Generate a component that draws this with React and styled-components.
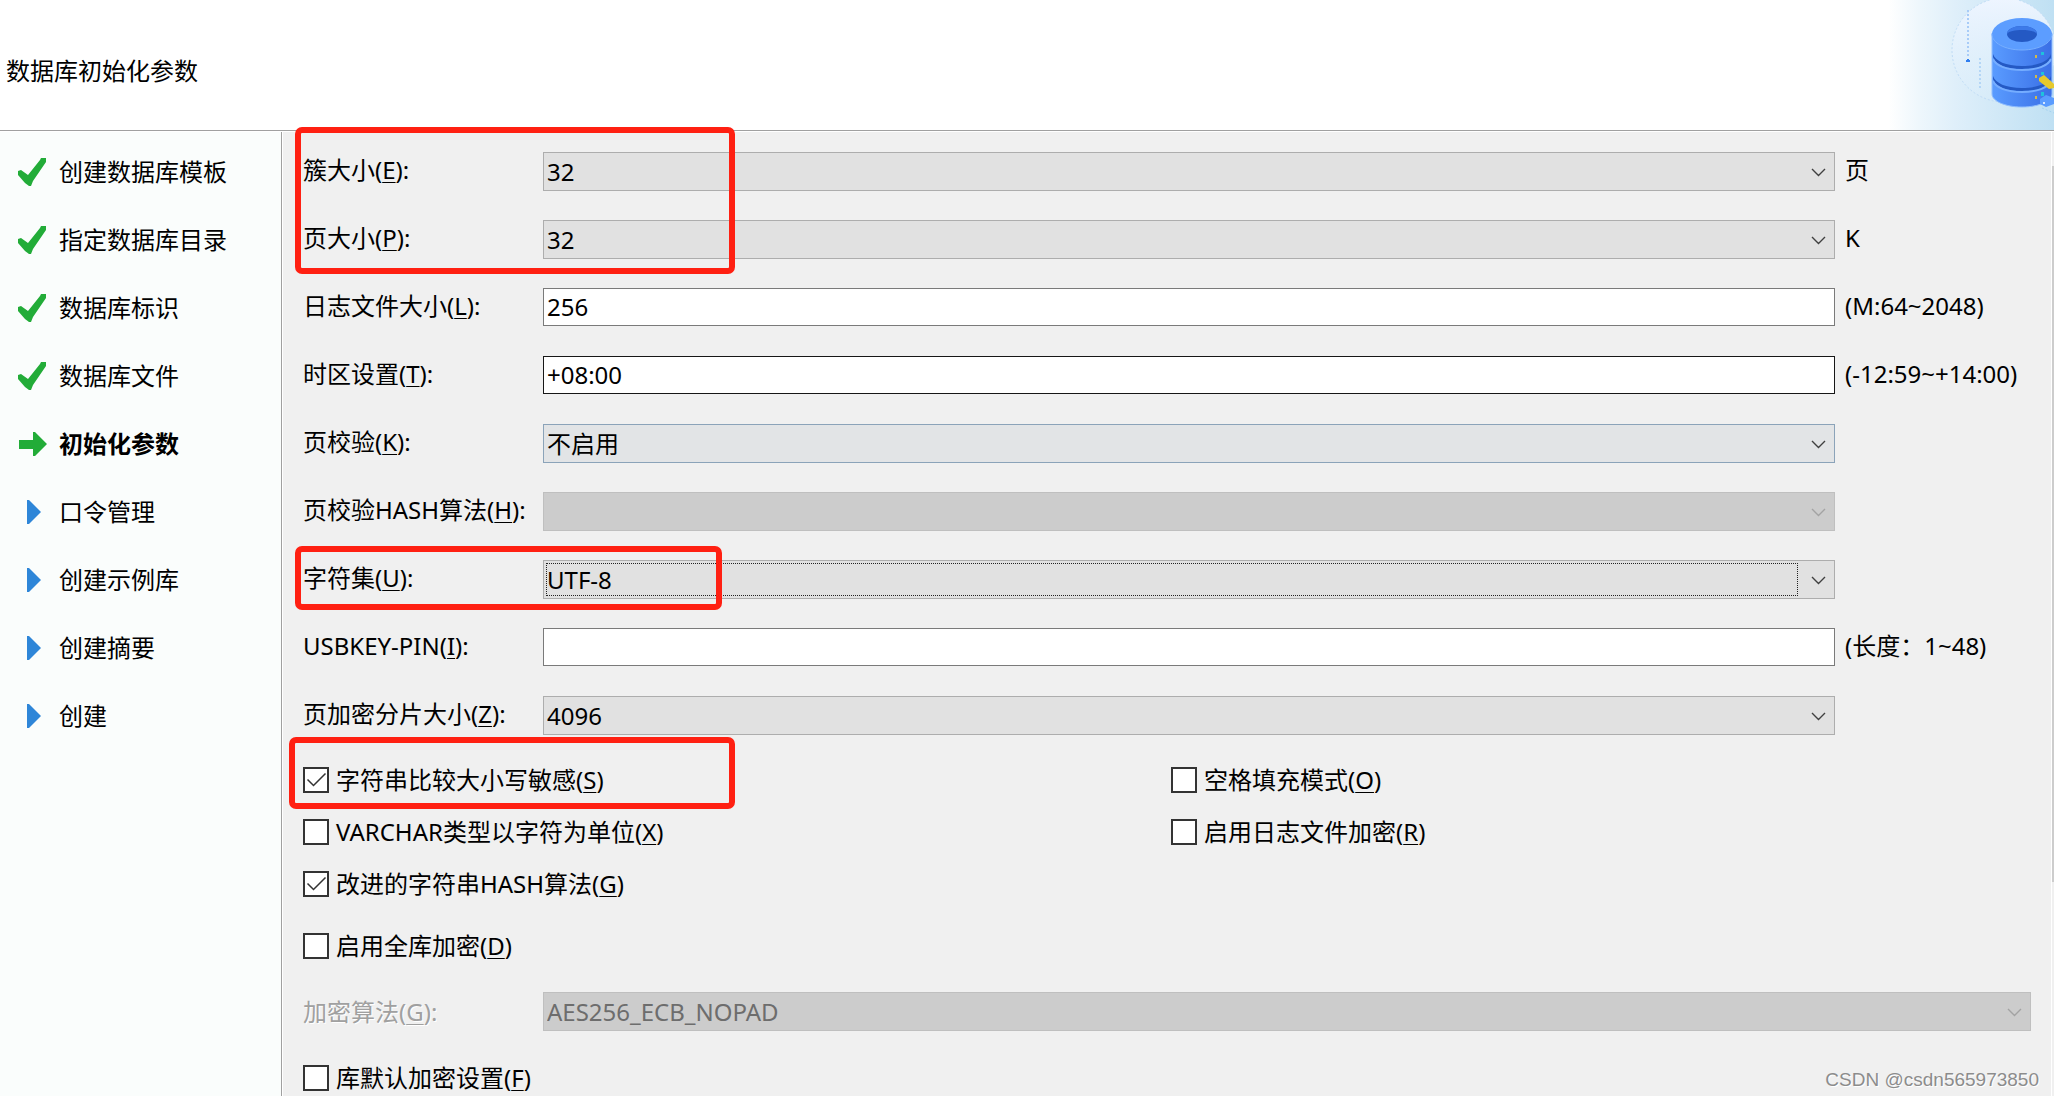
import React from 'react';
import styled, { createGlobalStyle, css } from 'styled-components';

const GlobalStyle = createGlobalStyle`
  * { box-sizing: border-box; }
  body {
    margin: 0;
    background: #f0f0f0;
  }
  body, input, select {
    font-family: 'Noto Sans', 'Noto Sans CJK SC', sans-serif;
    font-size: 24px;
    color: #000;
  }
`;

const Page = styled.div`
  position: relative;
  display: flex;
  flex-direction: column;
  height: 100vh;
  overflow: hidden;
`;

const Header = styled.header`
  display: flex;
  justify-content: space-between;
  align-items: center;
  flex: none;
  height: 131px;
  padding-left: 6px;
  background: #fff;
  border-bottom: 1px solid #a0a0a0;
`;

const Title = styled.h1`
  margin: 0;
  padding-top: 12px;
  font-size: 24px;
  font-weight: 400;
  line-height: 36px;
`;

const Banner = styled.svg`
  width: 180px;
  height: 130px;
  background: linear-gradient(90deg, #fff 8%, #eef7fc 25%, #dfeffa 45%, #bfe0f3 100%);
`;

const Body = styled.div`
  display: flex;
  flex: 1;
  min-height: 0;
  border-top: 1px solid #fff;
`;

const Sidebar = styled.nav`
  flex: none;
  width: 282px;
  padding-top: 6px;
  background: #fafdfc;
  border-right: 1px solid #a0a0a0;
`;

const StepList = styled.ol`
  margin: 0;
  padding: 0;
  list-style: none;
`;

const Step = styled.li`
  display: flex;
  align-items: center;
  gap: 11px;
  height: 68px;
  padding-left: 16px;
  line-height: 36px;
  font-weight: ${props => (props.$active ? 700 : 400)};
`;

const StepIcon = styled.svg`
  flex: none;
  width: 32px;
  height: 32px;
`;

const Panel = styled.main`
  flex: 1;
  min-width: 0;
  padding: 20px 20px 0 20px;
  border-left: 1px solid #fff;
`;

const ScrollTrack = styled.div`
  flex: none;
  width: 3px;
  padding-top: 34px;
  border-left: 1px solid #fff;
`;

const ScrollThumb = styled.div`
  height: 77%;
  background: #cdcdcd;
`;

const Fields = styled.div`
  display: flex;
  flex-direction: column;
  gap: 29px;
`;

const Field = styled.div`
  display: grid;
  grid-template-columns: ${props => (props.$wide ? '240px 1fr' : '240px 1fr 196px')};
  align-items: start;
  height: 39px;
  position: relative;
`;

const Label = styled.label`
  line-height: 36px;
  white-space: nowrap;
  ${props => props.$off && css`
    line-height: 40px;
    color: #a0a0a0;
    text-shadow: 1px 1px 0 #fff;
  `}
`;

const Key = styled.u`
  text-decoration-thickness: 1px;
  text-underline-offset: 3px;
`;

const Hint = styled.span`
  padding-left: 10px;
  line-height: 36px;
  white-space: nowrap;
`;

const TextBox = styled.input`
  width: 100%;
  height: 38px;
  padding: 0 3px 2px;
  border: 1px solid ${props => (props.$strong ? '#171717' : '#7a7a7a')};
  border-radius: 0;
  background: #fff;
  outline: none;
`;

const SelectWrap = styled.div`
  position: relative;
`;

const tones = {
  normal: ['#e1e1e1', '#adadad', '#000'],
  hover: ['#e2e4e6', '#8ba3b9', '#000'],
  off: ['#cccccc', '#bfbfbf', '#6d6d6d'],
};

const SelectBox = styled.select`
  display: block;
  appearance: none;
  width: 100%;
  height: 39px;
  padding: 0 38px 0 3px;
  border: 1px solid ${props => tones[props.$tone][1]};
  border-radius: 0;
  background: ${props => tones[props.$tone][0]};
  color: ${props => tones[props.$tone][2]};
  opacity: 1;
  outline: none;
`;

const Chevron = styled.svg`
  position: absolute;
  top: 16px;
  right: 9px;
  width: 15px;
  height: 9px;
  pointer-events: none;
`;

const FocusRing = styled.span`
  position: absolute;
  inset: 3px 37px 3px 3px;
  border: 1px dotted #222;
  pointer-events: none;
`;

const CheckGrid = styled.div`
  display: grid;
  grid-template-columns: 1fr 1fr;
  column-gap: 8px;
  margin-top: 19px;
  position: relative;
`;

const CheckRow = styled.div`
  grid-column: ${props => props.$col || 1};
  display: flex;
  align-items: center;
  gap: 7px;
  height: 52px;
`;

const CheckBox = styled.input`
  appearance: none;
  flex: none;
  width: 26px;
  height: 26px;
  margin: 0;
  border: 2px solid #333;
  background: #fff;
  &:checked {
    background: #fff url("data:image/svg+xml,%3Csvg xmlns='http://www.w3.org/2000/svg' width='22' height='22'%3E%3Cpath d='M2.500 10.500l6 6L20.500 4.500' fill='none' stroke='%23333' stroke-width='1.500'/%3E%3C/svg%3E") center no-repeat;
  }
`;

const Section = styled.div`
  margin-top: ${props => props.$gap}px;
`;

// red frames drawn over the settings that matter
const Mark = styled.span`
  position: absolute;
  left: ${props => props.$left}px;
  top: ${props => props.$top}px;
  width: ${props => props.$width}px;
  height: ${props => props.$height}px;
  border: 6px solid #ff2012;
  border-radius: 7px;
  pointer-events: none;
  z-index: 1;
`;

const Watermark = styled.span`
  position: absolute;
  right: 15px;
  bottom: 4px;
  font-family: 'Liberation Sans', sans-serif;
  font-size: 19px;
  line-height: 24px;
  color: #8c8c8c;
  text-shadow: 1px 1px 0 #fff;
`;

const steps = [
  ['创建数据库模板', 'done'],
  ['指定数据库目录', 'done'],
  ['数据库标识', 'done'],
  ['数据库文件', 'done'],
  ['初始化参数', 'active'],
  ['口令管理', 'todo'],
  ['创建示例库', 'todo'],
  ['创建摘要', 'todo'],
  ['创建', 'todo'],
];

const fields = [
  { id: 'extent', text: '簇大小', k: 'E', type: 'select', value: '32', hint: '页', mark: [-8, -25, 440, 147] },
  { id: 'page', text: '页大小', k: 'P', type: 'select', value: '32', hint: 'K' },
  { id: 'log', text: '日志文件大小', k: 'L', type: 'text', value: '256', hint: '(M:64~2048)' },
  { id: 'zone', text: '时区设置', k: 'T', type: 'text', value: '+08:00', hint: '(-12:59~+14:00)', strong: true },
  { id: 'check', text: '页校验', k: 'K', type: 'select', value: '不启用', tone: 'hover' },
  { id: 'hash', text: '页校验HASH算法', k: 'H', type: 'select', value: '', tone: 'off' },
  { id: 'charset', text: '字符集', k: 'U', type: 'select', value: 'UTF-8', ring: true, mark: [-8, -14, 427, 64] },
  { id: 'pin', text: 'USBKEY-PIN', k: 'I', type: 'text', value: '', hint: '(长度：1~48)' },
  { id: 'slice', text: '页加密分片大小', k: 'Z', type: 'select', value: '4096' },
];

function Icon({ state }) {
  return (
    <StepIcon viewBox="0 0 32 32" aria-hidden="true">
      {state === 'done' && <path d="M2 15l3-1 7 5L24 4l1-2h5v4L17 25l-2 5h-2l-4-3-7-8z" fill="#22ac38" />}
      {state === 'active' && <path d="M3 12h14V4h2l12 12-12 12h-2v-7H3z" fill="#22ac38" />}
      {state === 'todo' && <path d="M11 4h2l12 12-12 12h-2z" fill="#2e86d8" />}
    </StepIcon>
  );
}

function Select({ id, value, tone = 'normal', ring }) {
  return (
    <SelectWrap>
      <SelectBox id={id} $tone={tone} disabled={tone === 'off'} defaultValue={value}>
        <option value={value}>{value}</option>
      </SelectBox>
      {ring && <FocusRing />}
      <Chevron viewBox="0 0 15 9">
        <path d="M1 1l6.500 6.500L14 1" fill="none" stroke={tone === 'off' ? '#a3a3a3' : '#404040'} strokeWidth="1.400" />
      </Chevron>
    </SelectWrap>
  );
}

function FieldRow({ f, wide }) {
  return (
    <Field $wide={wide}>
      {f.mark && <Mark $left={f.mark[0]} $top={f.mark[1]} $width={f.mark[2]} $height={f.mark[3]} />}
      <Label htmlFor={f.id} $off={wide}>{f.text}(<Key>{f.k}</Key>):</Label>
      {f.type === 'select'
        ? <Select id={f.id} value={f.value} tone={f.tone} ring={f.ring} />
        : <TextBox id={f.id} type="text" defaultValue={f.value} $strong={f.strong} />}
      {f.hint && <Hint>{f.hint}</Hint>}
    </Field>
  );
}

function Check({ id, text, k, checked, col }) {
  return (
    <CheckRow $col={col}>
      <CheckBox id={id} type="checkbox" defaultChecked={checked} />
      <Label htmlFor={id}>{text}(<Key>{k}</Key>)</Label>
    </CheckRow>
  );
}

function DatabaseArt() {
  return (
    <Banner viewBox="0 0 180 130" aria-hidden="true">
      <defs>
        <linearGradient id="side" x1="0" x2="1">
          <stop offset="0" stopColor="#5a9cff" />
          <stop offset="1" stopColor="#3a6fe6" />
        </linearGradient>
        <linearGradient id="disc" x1="0" x2="0" y1="0" y2="1">
          <stop offset="0" stopColor="#eef5ff" />
          <stop offset="1" stopColor="#dceefa" stopOpacity="0.400" />
        </linearGradient>
      </defs>
      <circle cx="130" cy="50" r="52" fill="url(#disc)" stroke="#c0dcf6" strokeDasharray="2 2" />
      <path d="M94 10v48" stroke="#a8ccf8" strokeWidth="2" strokeDasharray="2 2" />
      <path d="M106 58v30" stroke="#b4d6f6" strokeWidth="2" strokeDasharray="2 2" />
      <path d="M92 61h4M94 59v3" stroke="#2f7ef0" strokeWidth="2" />
      <path d="M118 33v61c0 7 13 13 30 13s30-6 30-13V33z" fill="url(#side)" stroke="#8fbdff" />
      <path d="M119 54c2 7 13 12 29 12s27-5 29-12v3c-2 8-13 12-29 12s-27-4-29-12z" fill="#2459c4" />
      <path d="M119 59c3 7 14 11 29 11s26-4 29-11" fill="none" stroke="#75adff" strokeWidth="2" />
      <path d="M119 76c2 7 13 12 29 12s27-5 29-12v3c-2 8-13 12-29 12s-27-4-29-12z" fill="#2459c4" />
      <path d="M119 81c3 7 14 11 29 11s26-4 29-11" fill="none" stroke="#75adff" strokeWidth="2" />
      <ellipse cx="148" cy="34" rx="30" ry="16" fill="#5c9dff" />
      <path d="M118 34c0 9 13 16 30 16s30-7 30-16" fill="none" stroke="#78b0ff" />
      <ellipse cx="148" cy="34" rx="15" ry="8" fill="#2459c4" />
      <path d="M133 34c0-5 7-8 15-8s15 3 15 8c-2-3-8-4-15-4s-13 1-15 4z" fill="#3d7ae8" />
      <path d="M161 55h2v3h-2zM161 75h2v3h-2zM161 96h2v3h-2z" fill="#d3b84a" />
      <path d="M167 52h3v3h-3zM167 72h3v3h-3zM167 92h3v4h-3z" fill="#1fc1dc" />
      <path d="M166 99l6-4 8 3v6l-8 3-6-3z" fill="#5a9cff" />
      <circle cx="170" cy="103" r="1" fill="#fff" />
      <path d="M165 78l5-3 10 9v4l-5 1-10-8z" fill="#e6c92c" />
      <path d="M168 108l12 5" stroke="#a4d2f0" strokeDasharray="2 2" />
    </Banner>
  );
}

export default function App() {
  return (
    <Page>
      <GlobalStyle />
      <Header>
        <Title>数据库初始化参数</Title>
        <DatabaseArt />
      </Header>
      <Body>
        <Sidebar>
          <StepList>
            {steps.map(([name, state]) => (
              <Step key={name} $active={state === 'active'}>
                <Icon state={state} />
                {name}
              </Step>
            ))}
          </StepList>
        </Sidebar>
        <Panel>
          <Fields>
            {fields.map(f => <FieldRow key={f.id} f={f} />)}
          </Fields>
          <CheckGrid>
            <Mark $left={-14} $top={-17} $width={446} $height={72} />
            <Check id="case" text="字符串比较大小写敏感" k="S" checked />
            <Check id="blank" text="空格填充模式" k="O" col={2} />
            <Check id="varchar" text="VARCHAR类型以字符为单位" k="X" />
            <Check id="logenc" text="启用日志文件加密" k="R" col={2} />
            <Check id="strhash" text="改进的字符串HASH算法" k="G" checked />
          </CheckGrid>
          <Section $gap={10}>
            <Check id="fullenc" text="启用全库加密" k="D" />
          </Section>
          <Section $gap={20}>
            <FieldRow wide f={{ id: 'algo', text: '加密算法', k: 'G', type: 'select', value: 'AES256_ECB_NOPAD', tone: 'off' }} />
          </Section>
          <Section $gap={21}>
            <Check id="defenc" text="库默认加密设置" k="F" />
          </Section>
        </Panel>
        <ScrollTrack>
          <ScrollThumb />
        </ScrollTrack>
      </Body>
      <Watermark>CSDN @csdn565973850</Watermark>
    </Page>
  );
}
